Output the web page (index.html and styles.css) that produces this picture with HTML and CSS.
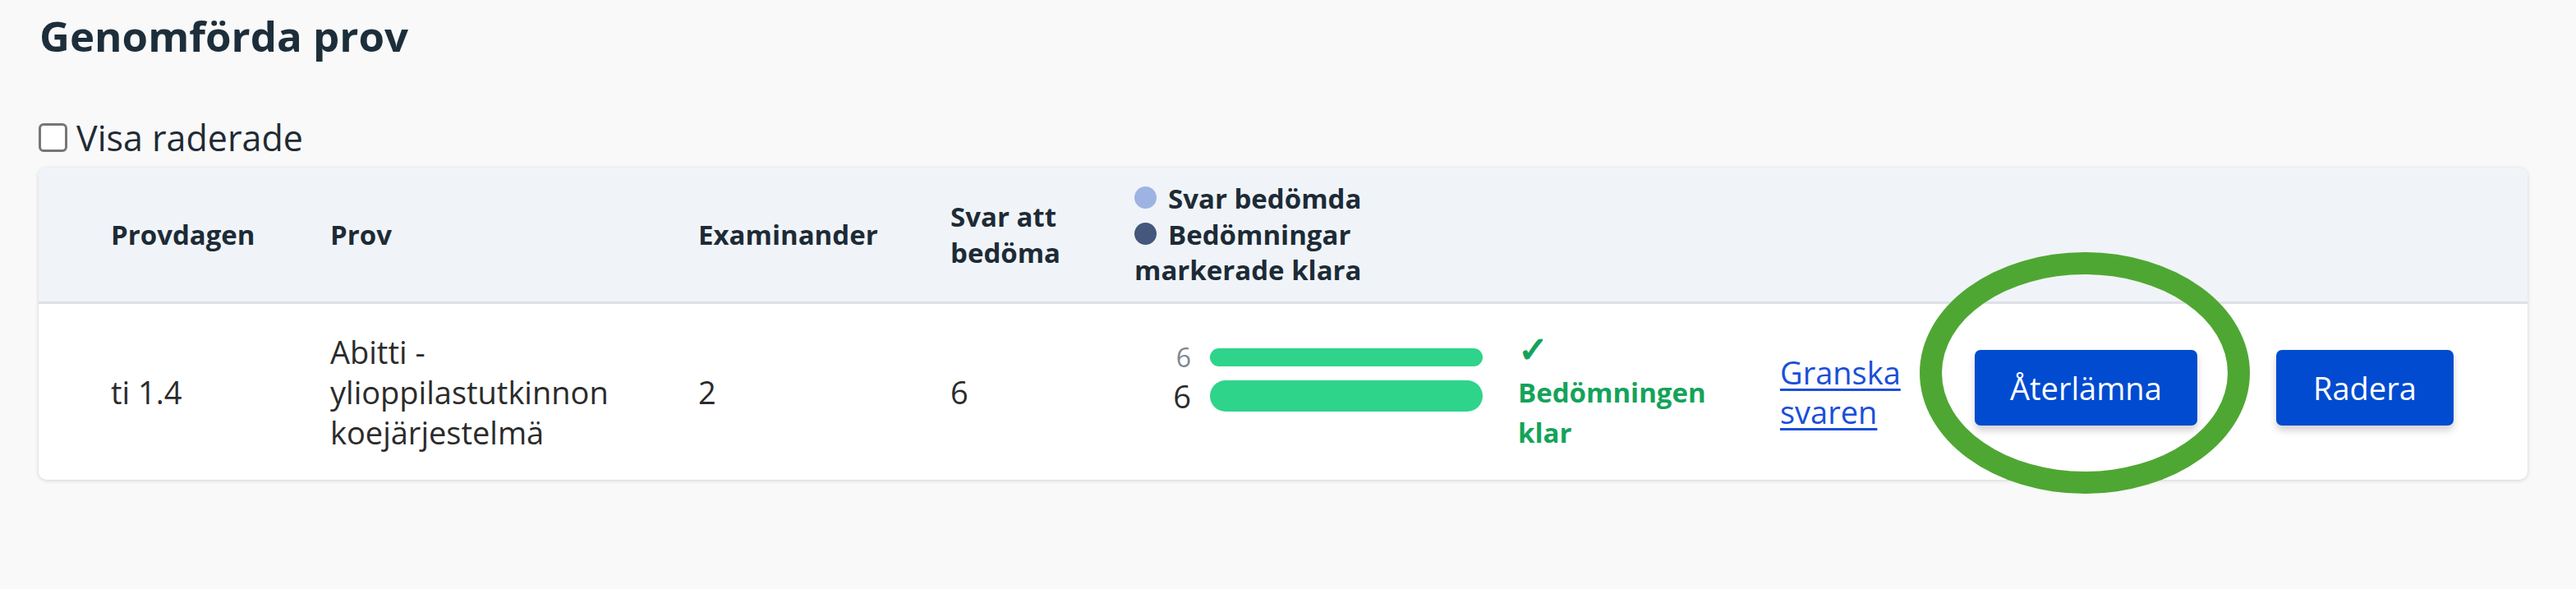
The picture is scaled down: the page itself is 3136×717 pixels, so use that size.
FILE: index.html
```html
<!DOCTYPE html>
<html lang="sv">
<head>
<meta charset="utf-8">
<title>Genomförda prov</title>
<link rel="stylesheet" href="styles.css">
</head>
<body>
<div class="page">
  <h1 class="title">Genomförda prov</h1>
  <label class="toggle"><input type="checkbox" class="toggle-box"><span>Visa raderade</span></label>
  <div class="card">
    <div class="grid thead">
      <div class="cell first">Provdagen</div>
      <div class="cell">Prov</div>
      <div class="cell">Examinander</div>
      <div class="cell">Svar att bedöma</div>
      <div class="cell">
        <div class="legend">
          <div class="legend-item"><span class="dot dot-light"></span>Svar bedömda</div>
          <div class="legend-item"><span class="dot dot-dark"></span>Bedömningar markerade klara</div>
        </div>
      </div>
      <div class="cell"></div>
      <div class="cell"></div>
      <div class="cell"></div>
      <div class="cell"></div>
    </div>
    <div class="grid trow">
      <div class="cell first">ti 1.4</div>
      <div class="cell">Abitti - ylioppilastutkinnon koejärjestelmä</div>
      <div class="cell">2</div>
      <div class="cell">6</div>
      <div class="cell">
        <div class="progress">
          <span class="num num-light">6</span><span class="bar bar-thin"></span>
          <span class="num num-dark">6</span><span class="bar bar-thick"></span>
        </div>
      </div>
      <div class="cell"><div class="status"><span class="check">✓</span> Bedömningen klar</div></div>
      <div class="cell"><a class="link" href="#">Granska svaren</a></div>
      <div class="cell"><button class="btn" type="button">Återlämna</button></div>
      <div class="cell"><button class="btn btn-narrow" type="button">Radera</button></div>
    </div>
  </div>
  <div class="highlight"></div>
</div>
</body>
</html>
```

FILE: styles.css
```css
html, body {
  margin: 0;
  padding: 0;
  background: #f9f9f9;
}

body {
  font-family: "Open Sans", "Noto Sans", sans-serif;
  color: #2b2b2b;
}

.page {
  position: relative;
  padding: 8px 59px 0 47px;
  min-height: 709px;
}

.title {
  margin: 0;
  padding-left: 1px;
  font-size: 51px;
  font-weight: 700;
  line-height: normal;
  color: #1d2e3b;
}

.toggle {
  margin-top: 60px;
  display: flex;
  align-items: center;
  font-size: 43px;
  line-height: normal;
  color: #1f2b35;
}

.toggle-box {
  appearance: none;
  -webkit-appearance: none;
  width: 35px;
  height: 35px;
  margin: 0 11px 0 0;
  border: 3px solid #767676;
  border-radius: 6px;
  background: #ffffff;
  box-sizing: border-box;
}

.card {
  margin-top: 7px;
  background: #ffffff;
  border-radius: 10px;
  box-shadow: 0 1px 5px rgba(0, 0, 0, 0.16);
  overflow: hidden;
}

.grid {
  display: grid;
  grid-template-columns: 355px 448px 307px 224px 467px 319px 237px 367px 1fr;
  align-items: center;
}

.thead {
  height: 163px;
  background: #f0f4f8;
  border-bottom: 3px solid #dde1e5;
  font-size: 33px;
  font-weight: 700;
  line-height: 44px;
  color: #1d2b36;
}

.trow {
  height: 214px;
  font-size: 38px;
  line-height: 49px;
  color: #2b2b2b;
}

.first {
  padding-left: 88px;
}

.legend {
  max-width: 300px;
  line-height: 43.5px;
}

.dot {
  display: inline-block;
  width: 27px;
  height: 27px;
  border-radius: 50%;
  margin-right: 14px;
}

.dot-light {
  background: #9db4e2;
}

.dot-dark {
  background: #44577c;
}

.progress {
  display: grid;
  grid-template-columns: 69px 332px;
  column-gap: 23px;
  row-gap: 12px;
  align-items: center;
  margin-bottom: 34px;
}

.num {
  text-align: right;
  line-height: 1;
}

.num-light {
  font-size: 32px;
  color: #7e8791;
}

.num-dark {
  font-size: 38px;
  color: #2b2b2b;
}

.bar {
  display: block;
  background: #2dd48a;
  border-radius: 20px;
}

.bar-thin {
  height: 22px;
}

.bar-thick {
  height: 38px;
}

.status {
  max-width: 240px;
  font-size: 33px;
  font-weight: 700;
  line-height: 49px;
  color: #14a35a;
}

.check {
  font-family: "DejaVu Sans", sans-serif;
  font-size: 44px;
  font-weight: 700;
  line-height: 40px;
  -webkit-text-stroke: 1.5px #14a35a;
}

.link {
  display: block;
  color: #1a4fd8;
  text-decoration: underline;
  text-decoration-thickness: 3px;
  text-underline-offset: 5px;
  line-height: 48px;
}

.btn {
  height: 92px;
  padding: 0 43px;
  margin-bottom: 10px;
  border: none;
  border-radius: 7px;
  background: #004bd0;
  color: #ffffff;
  font-family: "Open Sans", "Noto Sans", sans-serif;
  font-size: 38px;
  font-weight: 500;
  box-shadow: 0 6px 10px rgba(0, 0, 0, 0.18);
}

.btn-narrow {
  padding: 0 45px;
}

.highlight {
  position: absolute;
  left: 2337px;
  top: 307px;
  width: 402px;
  height: 294px;
  box-sizing: border-box;
  border: 27px solid #4fa733;
  border-radius: 50%;
  pointer-events: none;
}
```
